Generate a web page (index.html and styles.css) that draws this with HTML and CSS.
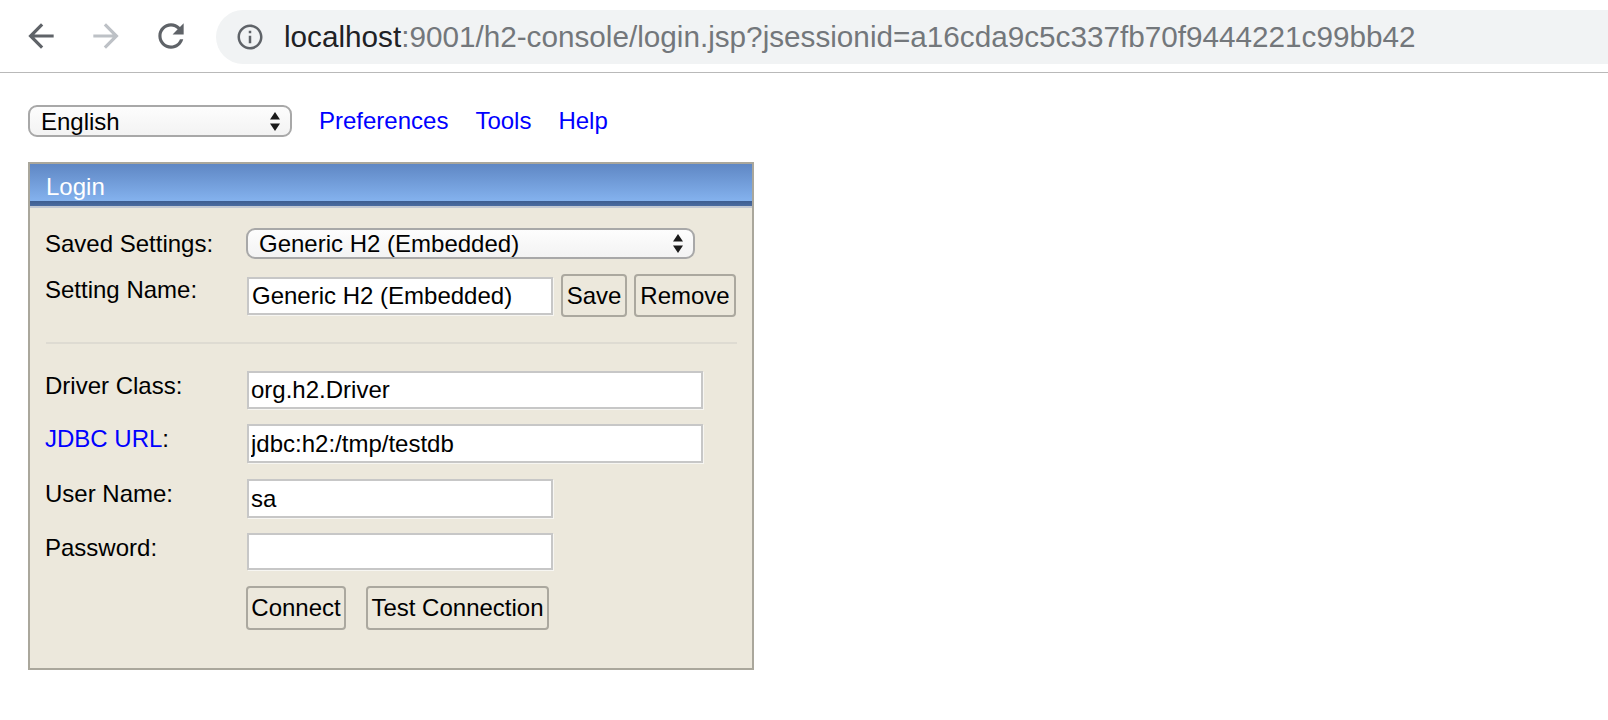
FILE: index.html
```html
<!DOCTYPE html>
<html lang="en">
<head>
<meta charset="utf-8">
<title>H2 Console</title>
<link rel="stylesheet" href="styles.css">
</head>
<body>
<div class="toolbar">
  <span class="nav-btn">
    <svg viewBox="0 0 24 24" width="38" height="38"><path fill="#5f6368" d="M20 11H7.83l5.59-5.59L12 4l-8 8 8 8 1.41-1.41L7.83 13H20v-2z"/></svg>
  </span>
  <span class="nav-btn">
    <svg viewBox="0 0 24 24" width="38" height="38"><path fill="#bdc1c6" d="M12 4l-1.41 1.41L16.17 11H4v2h12.17l-5.58 5.59L12 20l8-8z"/></svg>
  </span>
  <span class="nav-btn">
    <svg viewBox="0 0 24 24" width="38" height="38"><path fill="#5f6368" d="M17.65 6.35C16.2 4.9 14.21 4 12 4c-4.42 0-7.99 3.58-7.990 8s3.57 8 7.99 8c3.73 0 6.84-2.55 7.73-6h-2.08c-.82 2.33-3.04 4-5.65 4-3.31 0-6-2.690-6-6s2.69-6 6-6c1.66 0 3.14.69 4.22 1.78L13 11h7V4l-2.35 2.35z"/></svg>
  </span>
  <div class="omnibox">
    <svg class="info" viewBox="0 0 24 24" width="30" height="30"><path fill="#5f6368" d="M11 7h2v2h-2zm0 4h2v6h-2zm1-9C6.48 2 2 6.48 2 12s4.48 10 10 10 10-4.48 10-10S17.52 2 12 2zm0 18c-4.41 0-8-3.59-8-8s3.59-8 8-8 8 3.59 8 8-3.59 8-8 8z"/></svg>
    <span class="url"><span class="host">localhost</span>:9001/h2-console/login.jsp?jsessionid=a16cda9c5c337fb70f9444221c99bb42</span>
  </div>
</div>

<div class="page">
  <div class="topbar">
    <div class="select-wrap lang">
      <select class="sel"><option>English</option></select>
      <svg class="updown" viewBox="0 0 12 19" width="12" height="19"><path fill="#1a1a1a" d="M6 0L11 7.5H1z M1 11.5H11L6 19z"/></svg>
    </div>
    <a href="#" class="link">Preferences</a>
    <a href="#" class="link">Tools</a>
    <a href="#" class="link">Help</a>
  </div>

  <div class="panel">
    <div class="panel-head">Login</div>
    <div class="panel-body">
      <div class="row r-saved">
        <span class="label">Saved Settings:</span>
        <div class="select-wrap saved">
          <select class="sel"><option>Generic H2 (Embedded)</option></select>
          <svg class="updown" viewBox="0 0 12 19" width="12" height="19"><path fill="#1a1a1a" d="M6 0L11 7.5H1z M1 11.5H11L6 19z"/></svg>
        </div>
      </div>
      <div class="row r-name">
        <span class="label">Setting Name:</span>
        <input class="field short name-in" type="text" value="Generic H2 (Embedded)">
        <button class="btn btn-save">Save</button>
        <button class="btn btn-remove">Remove</button>
      </div>
      <div class="divider"></div>
      <div class="row r-driver">
        <span class="label">Driver Class:</span>
        <input class="field long" type="text" value="org.h2.Driver">
      </div>
      <div class="row r-url">
        <span class="label"><a href="#" class="link">JDBC URL</a>:</span>
        <input class="field long" type="text" value="jdbc:h2:/tmp/testdb">
      </div>
      <div class="row r-user">
        <span class="label">User Name:</span>
        <input class="field short" type="text" value="sa">
      </div>
      <div class="row r-pass">
        <span class="label">Password:</span>
        <input class="field short" type="password" value="">
      </div>
      <div class="row r-actions">
        <span class="label"></span>
        <button class="btn btn-connect">Connect</button>
        <button class="btn btn-test">Test Connection</button>
      </div>
    </div>
  </div>
</div>
</body>
</html>
```

FILE: styles.css
```css
* { box-sizing: border-box; }

html, body {
  margin: 0;
  padding: 0;
  background: #ffffff;
  font-family: "Liberation Sans", Arial, sans-serif;
  color: #000;
}

/* ---------- browser chrome ---------- */
.toolbar {
  height: 73px;
  display: flex;
  align-items: center;
  padding-left: 22px;
  border-bottom: 1px solid #b9b9b9;
  overflow: hidden;
  white-space: nowrap;
}

.nav-btn {
  width: 38px;
  height: 38px;
  display: flex;
  align-items: center;
  justify-content: center;
  margin-right: 27px;
  flex: none;
}

.nav-btn:nth-child(3) { margin-right: 26px; }

.omnibox {
  flex: none;
  width: 1460px;
  height: 54px;
  margin-top: 1px;
  border-radius: 27px;
  background: #f1f3f4;
  display: flex;
  align-items: center;
  padding-left: 19px;
}

.info { flex: none; margin-right: 19px; }

.url {
  font-size: 29.7px;
  color: #73777b;
}

.url .host { color: #202124; }

/* ---------- page ---------- */
.page {
  padding: 32px 0 0 28px;
}

.topbar {
  display: flex;
  align-items: center;
  height: 32px;
}

.link {
  color: #0000ff;
  text-decoration: none;
  font-size: 24px;
}

.topbar .link { margin-left: 27px; line-height: 32px; }

.select-wrap {
  position: relative;
  flex: none;
}

.select-wrap.lang { width: 264px; height: 32px; }
.select-wrap.saved { width: 449px; height: 31px; }

.sel {
  -webkit-appearance: none;
  appearance: none;
  width: 100%;
  height: 100%;
  margin: 0;
  border: 2px solid #a8a8a8;
  border-radius: 9px;
  background: linear-gradient(#fdfdfd, #f3f3f3);
  font-family: "Liberation Sans", Arial, sans-serif;
  font-size: 24px;
  color: #000;
  padding: 0 0 0 11px;
  line-height: 27px;
}

.updown {
  position: absolute;
  right: 11px;
  top: 50%;
  margin-top: -9.5px;
}

/* ---------- panel ---------- */
.panel {
  width: 726px;
  margin-top: 25px;
  border: 2px solid #aaa79c;
  background: #ece8dc;
}

.panel-head {
  height: 44px;
  padding: 4px 0 0 16px;
  line-height: 37px;
  font-size: 24px;
  color: #ffffff;
  background:
    linear-gradient(#3e5e91, #4b6ca0) 0 37px / 100% 5px no-repeat,
    linear-gradient(#c3c9d3, #c3c9d3) 0 42px / 100% 2px no-repeat,
    linear-gradient(#5f87c4, #84b2ee) 0 0 / 100% 37px no-repeat;
}

.panel-body {
  padding: 20px 15px 38px 15px;
}

.row {
  display: flex;
  align-items: flex-start;
}

.label {
  flex: none;
  width: 201px;
  font-size: 24px;
  line-height: 28px;
  margin-top: 1px;
}

.r-saved .label { margin-top: 2px; }
.r-name { height: 43px; margin-top: 15px; }
.r-name .label { margin-top: 2px; }
.r-driver { margin-top: 27px; }
.r-url { margin-top: 15px; }
.r-user { margin-top: 16px; }
.r-pass { margin-top: 15px; }
.r-actions { margin-top: 16px; }

.divider {
  margin-top: 25px;
  margin-left: 1px;
  height: 2px;
  background: #dedbd2;
}

.field {
  flex: none;
  margin: 0 0 0 1px;
  height: 38px;
  border: 2px solid #c7c7c7;
  background: #fff;
  box-shadow: 1px 1px 0 #f7f6f2;
  font-family: "Liberation Sans", Arial, sans-serif;
  font-size: 24px;
  color: #000;
  padding: 0 2px;
  outline: none;
}

.field.short { width: 306px; }
.field.long { width: 456px; }
.name-in { margin-top: 3px; padding-left: 3px; }
.r-url .field, .r-user .field { height: 39px; }
.r-pass .field { height: 37px; }

.btn {
  flex: none;
  height: 43px;
  margin: 0;
  padding: 0;
  border: 2px solid #aba89f;
  border-radius: 4px;
  background: #ece8dc;
  font-family: "Liberation Sans", Arial, sans-serif;
  font-size: 24px;
  color: #000;
  text-align: center;
}

.btn-save { width: 66px; margin-left: 8px; }
.btn-remove { width: 102px; margin-left: 7px; }
.btn-connect { width: 100px; height: 44px; }
.btn-test { width: 183px; height: 44px; margin-left: 20px; }
```
